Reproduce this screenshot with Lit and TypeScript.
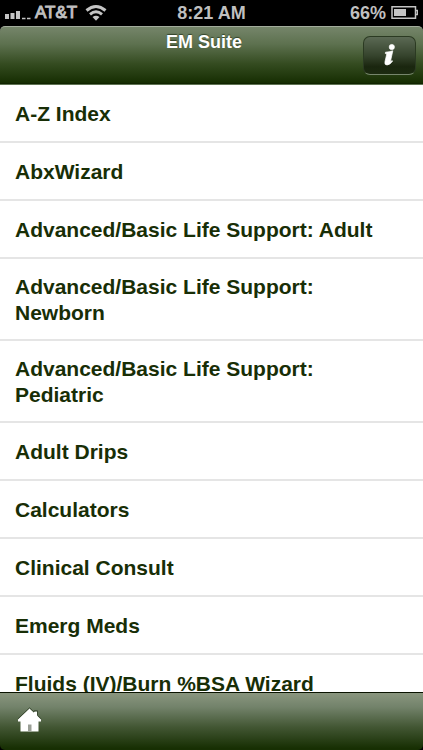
import { LitElement, html, css } from "lit";
import { customElement } from "lit/decorators.js";

const TOPICS = [
  "A-Z Index",
  "AbxWizard",
  "Advanced/Basic Life Support: Adult",
  "Advanced/Basic Life Support: Newborn",
  "Advanced/Basic Life Support: Pediatric",
  "Adult Drips",
  "Calculators",
  "Clinical Consult",
  "Emerg Meds",
  "Fluids (IV)/Burn %BSA Wizard",
];

@customElement("status-bar")
class StatusBar extends LitElement {
  static styles = css`
    :host {
      display: grid;
      grid-template-columns: 1fr auto 1fr;
      align-items: center;
      height: 26px;
      box-sizing: border-box;
      padding: 0 5px;
      background: #000;
      color: #bfbfbf;
      font-size: 18px;
      line-height: 26px;
      font-weight: bold;
    }
    .side {
      display: flex;
      align-items: center;
    }
    .carrier {
      gap: 4px;
      font-size: 17px;
      font-weight: normal;
      -webkit-text-stroke: 1px #bfbfbf;
    }
    .power {
      justify-content: flex-end;
      gap: 5px;
    }
    svg {
      display: block;
      flex: none;
    }
    .wifi {
      margin-left: 4px;
    }
  `;
  render() {
    return html`
      <div class="side carrier">
        <svg width="26" height="26" viewBox="0 0 26 26" fill="#c4c4c4" aria-label="Signal">
          <path d="M0 14h4v5H0zM5.500 13h4v6h-4zM11 11h4v8h-4zM17 17.700h3.500v1.500H17zM22 17.700h3.500v1.500H22z" />
        </svg>
        <span>AT&amp;T</span>
        <svg class="wifi" width="22" height="26" viewBox="0 0 22 26" fill="none" stroke="#c4c4c4" stroke-width="3" aria-label="Wi-Fi">
          <path d="M1.500 10.500Q11 2.500 20.500 10.500M5 14.300Q11 9.300 17 14.300" />
          <path d="M7.500 17Q11 14.500 14.500 17L11 20.800z" fill="#c4c4c4" stroke="none" />
        </svg>
      </div>
      <span>8:21 AM</span>
      <div class="side power">
        <span>66%</span>
        <svg width="27" height="26" viewBox="0 0 27 26" aria-label="Battery">
          <path d="M1 6.700h23.500v11.600H1zM24.500 10.500h2v4h-2" fill="none" stroke="#c4c4c4" stroke-width="1.500" />
          <path d="M3 9h12v7H3z" fill="#c4c4c4" />
        </svg>
      </div>
    `;
  }
}

@customElement("topic-list")
class TopicList extends LitElement {
  static styles = css`
    ul {
      list-style: none;
      margin: 0;
      padding: 0;
    }
    a {
      display: flex;
      align-items: center;
      box-sizing: border-box;
      min-height: 58px;
      padding: 15px 15px 13px;
      border-bottom: 2px solid #e5e5e5;
      color: #182e06;
      font-size: 21px;
      line-height: 26px;
      font-weight: bold;
      text-decoration: none;
    }
  `;
  render() {
    return html`<ul>
      ${TOPICS.map((t) => html`<li><a href="#">${t}</a></li>`)}
    </ul>`;
  }
}

@customElement("app-root")
class AppRoot extends LitElement {
  static styles = css`
    :host {
      display: flex;
      flex-direction: column;
      height: 100vh;
      background: #000;
      font-family: "Liberation Sans", Arial, Helvetica, sans-serif;
    }
    header {
      display: grid;
      grid-template-columns: 1fr auto 1fr;
      align-items: start;
      height: 59px;
      box-sizing: border-box;
      padding: 0 7px 0 0;
      border-top: 1px solid #a3ac9c;
      border-bottom: 1px solid #5f7352;
      border-radius: 5px 5px 0 0;
      background: linear-gradient(#75856a, #5d714f 30%, #344b20 65%, #172f03 97%, #0e2000);
    }
    h1 {
      grid-column: 2;
      margin: 4px 8px 0 0;
      color: #fff;
      font-size: 18px;
      line-height: 22px;
      text-shadow: 0 -1px 1px #33442a;
    }
    button {
      padding: 0;
      border: 0;
      cursor: pointer;
    }
    .info {
      justify-self: end;
      width: 53px;
      height: 39px;
      margin-top: 9px;
      padding-bottom: 2px;
      border: 1px solid #2b3a22;
      border-bottom-color: #76866c;
      border-radius: 7px;
      background: linear-gradient(#5b6954, #36442d 50%, #1a260f 80%, #1c2b10);
    }
    svg {
      display: block;
      margin: auto;
    }
    main {
      flex: 1;
      min-height: 0;
      overflow: hidden;
      background: #fff;
    }
    footer {
      display: flex;
      align-items: center;
      height: 58px;
      box-sizing: border-box;
      padding: 0 15px 6px;
      border-top: 1px solid #0a1300;
      border-radius: 0 0 5px 5px;
      background: linear-gradient(#8a967f, #72826a 25%, #425633 60%, #172f03 97%);
    }
    .home {
      background: none;
    }
  `;
  render() {
    return html`
      <status-bar></status-bar>
      <header>
        <h1>EM Suite</h1>
        <button class="info" aria-label="Information">
          <svg width="14" height="24" viewBox="0 0 14 24" fill="#fff" stroke="#fff" stroke-width="0.700">
            <circle cx="8.800" cy="4" r="2.600" />
            <path d="M2.500 9.200Q6 9 9.800 7.800L7.500 18.200Q7.400 19.200 8.900 17.400L9.600 18Q7 22 4 22Q1.200 22 2 18.500L3.600 11.800Q4 10.500 2.300 10.500z" />
          </svg>
        </button>
      </header>
      <main><topic-list></topic-list></main>
      <footer>
        <button class="home" aria-label="Home">
          <svg width="28" height="28" viewBox="0 0 28 28">
            <path d="M3 14.500L14.500 3.500L19 7.700V6.500H22.500V11L26 14.500V16.500H23.500V26.500H5.500V16.500H3z" fill="#fff" />
            <path d="M3 13.800L14.500 2.800L19 7V5.800H22.500V10.300L26 13.800" fill="none" stroke="#3c4b33" />
            <path d="M13 19.500h3.500v7H13z" fill="#9a9f96" />
          </svg>
        </button>
      </footer>
    `;
  }
}
